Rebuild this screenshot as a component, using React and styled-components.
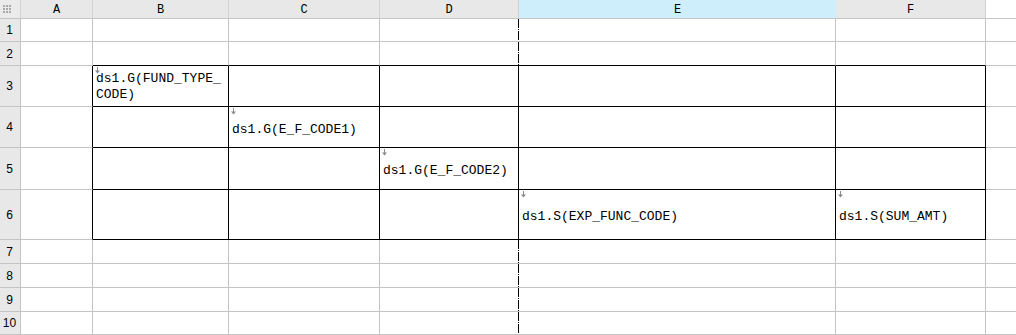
import React from "react";
import styled, { createGlobalStyle, css } from "styled-components";

const GlobalStyle = createGlobalStyle`
  html, body { margin: 0; padding: 0; background: #ffffff; }
  body { font-family: "Liberation Sans", Arial, sans-serif; overflow: hidden; }
`;

const GRID = "#c4c4c4";
const HEAD_LINE = "#d2d2d2";

const Sheet = styled.div`
  display: grid;
  width: 1016px;
  height: 335px;
  grid-template-columns: 21px 72px 136px 151px 139px 317px 150px 1fr;
  grid-template-rows: 19px 23px 24px 41px 41px 42px 50px 24px 24px 24px 23px;
  overflow: hidden;
`;

const Corner = styled.div`
  box-sizing: border-box;
  background: #ebebeb;
  border-right: 1px solid ${HEAD_LINE};
  border-bottom: 1px solid ${GRID};
  display: flex;
  align-items: center;
  padding-left: 3px;
`;

const ColHeader = styled.div`
  box-sizing: border-box;
  display: flex;
  align-items: center;
  justify-content: center;
  font-family: "Liberation Mono", "DejaVu Sans Mono", monospace;
  font-size: 12px;
  color: #000;
  border-bottom: 1px solid ${GRID};
  background: ${(p) => (p.$blank ? "#ffffff" : p.$active ? "#cdeefa" : "#e8e8e8")};
  border-right: ${(p) => (p.$blank ? "0" : p.$active ? "0" : `1px solid ${HEAD_LINE}`)};
  padding-top: 1px;
`;

const RowHeader = styled.div`
  box-sizing: border-box;
  display: flex;
  align-items: center;
  justify-content: center;
  font-family: "Liberation Sans", Arial, sans-serif;
  font-size: 12px;
  color: #000;
  background: #e8e8e8;
  border-right: 1px solid ${GRID};
  border-bottom: 1px solid ${GRID};
  padding-right: 1px;
`;

const dashBg = css`
  background-image: repeating-linear-gradient(
    to bottom,
    #000 0px,
    #000 9px,
    transparent 9px,
    transparent 10px,
    #000 10px,
    #000 11px,
    transparent 11px,
    transparent 12px
  );
  background-size: 1px 100%;
  background-position: right top;
  background-repeat: no-repeat;
  background-origin: border-box;
`;

const borderFor = (kind) =>
  kind === "black" ? "1px solid #000" : kind === "grid" ? `1px solid ${GRID}` : "0";

const Cell = styled.div`
  box-sizing: border-box;
  position: relative;
  display: flex;
  align-items: center;
  padding: ${(p) => (p.$multi ? "1px" : "5px")} 0 0 3px;
  background-color: #fff;
  border-right: ${(p) => borderFor(p.$right)};
  border-bottom: ${(p) => borderFor(p.$bottom)};
  ${(p) => p.$right === "dash" && dashBg}
`;

const CellText = styled.div`
  font-family: "Liberation Mono", "DejaVu Sans Mono", monospace;
  font-size: 13px;
  line-height: 16px;
  color: #000;
  white-space: nowrap;
`;

const Arrow = styled.svg`
  position: absolute;
  left: 1px;
  top: 1px;
  width: 7px;
  height: 7px;
`;

const ExpandArrow = () => (
  <Arrow viewBox="0 0 7 7">
    <line x1="3.5" y1="0" x2="3.5" y2="4" stroke="#8a8a8a" strokeWidth="1" />
    <path d="M1 3.5 L6 3.5 L3.5 6.5 Z" fill="#8a8a8a" />
  </Arrow>
);

const CornerDots = () => (
  <svg width="9" height="9" viewBox="0 0 9 9">
    {[0, 3, 6].map((y) =>
      [0, 3, 6].map((x) => (
        <rect key={`${x}-${y}`} x={x} y={y} width="2" height="2" fill="#a8a8a8" />
      ))
    )}
  </svg>
);

const COLS = ["A", "B", "C", "D", "E", "F"];

const CONTENT = {
  "B3": ["ds1.G(FUND_TYPE_", "CODE)"],
  "C4": ["ds1.G(E_F_CODE1)"],
  "D5": ["ds1.G(E_F_CODE2)"],
  "E6": ["ds1.S(EXP_FUNC_CODE)"],
  "F6": ["ds1.S(SUM_AMT)"],
};

const inBoxRows = (r) => r >= 3 && r <= 6;

export default function App() {
  const rows = Array.from({ length: 10 }, (_, i) => i + 1);
  return (
    <>
      <GlobalStyle />
      <Sheet>
        <Corner>
          <CornerDots />
        </Corner>
        {COLS.map((c) => (
          <ColHeader key={c} $active={c === "E"}>
            {c}
          </ColHeader>
        ))}
        <ColHeader $blank />
        {rows.map((r) => (
          <React.Fragment key={r}>
            <RowHeader>{r}</RowHeader>
            {COLS.map((c, ci) => {
              let right = "grid";
              if (inBoxRows(r)) right = "black";
              else if (c === "D") right = "dash";
              const bottom = ci >= 1 && r >= 2 && r <= 6 ? "black" : "grid";
              const lines = CONTENT[`${c}${r}`];
              return (
                <Cell
                  key={c}
                  $right={right}
                  $bottom={bottom}
                  $multi={lines && lines.length > 1}
                >
                  {lines && <ExpandArrow />}
                  {lines && (
                    <CellText>
                      {lines.map((l, i) => (
                        <React.Fragment key={i}>
                          {i > 0 && <br />}
                          {l}
                        </React.Fragment>
                      ))}
                    </CellText>
                  )}
                </Cell>
              );
            })}
            <Cell $right="none" $bottom="grid" />
          </React.Fragment>
        ))}
      </Sheet>
    </>
  );
}
